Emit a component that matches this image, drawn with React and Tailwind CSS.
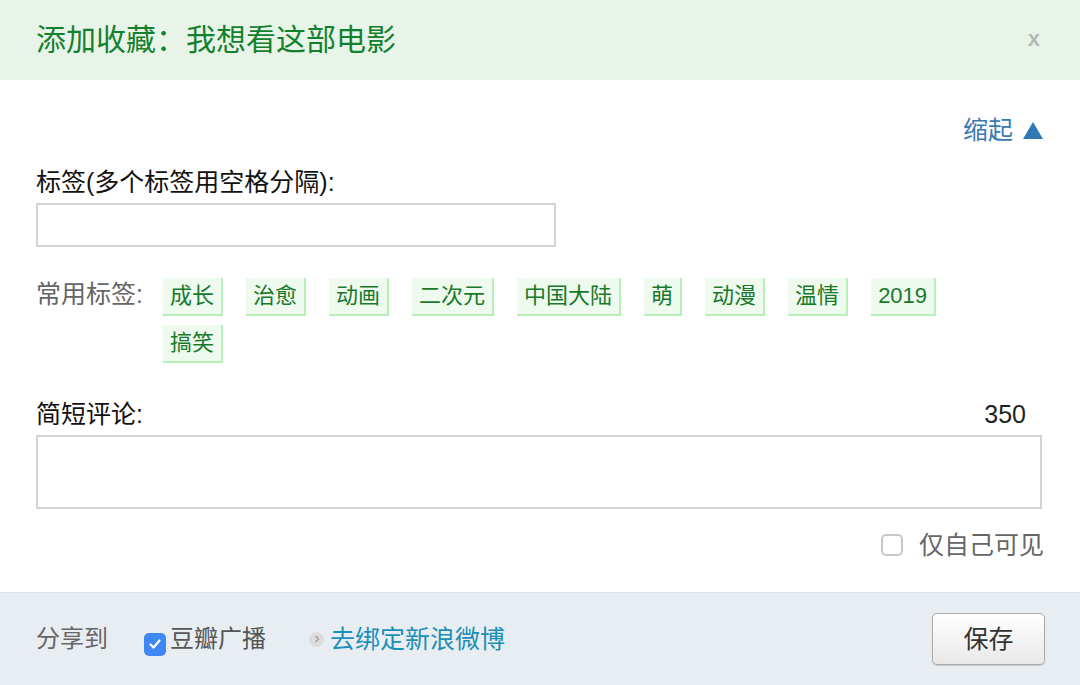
import React from 'react';

const tags = ['成长', '治愈', '动画', '二次元', '中国大陆', '萌', '动漫', '温情', '2019', '搞笑'];

const font = { fontFamily: '"Liberation Sans", "Noto Sans CJK SC", sans-serif' };

export default function App() {
  return (
    <div className="w-[1080px] h-[685px] bg-white flex flex-col overflow-hidden" style={font}>
      {/* Header */}
      <div className="h-[80px] bg-[#e9f4e8] flex items-center justify-between pl-[36px] pr-[40px] shrink-0">
        <h2 className="text-[30px] leading-none text-[#13802d]">添加收藏：我想看这部电影</h2>
        <span className="text-[22px] font-bold leading-none text-[#b8b8b8] pb-[2px]">x</span>
      </div>

      {/* Body */}
      <div className="flex-1 px-[36px]">
        <div className="flex justify-end pt-[34px]">
          <a className="text-[25px] leading-[32px] text-[#3a78ad] flex items-center gap-[10px] pr-[1px]">
            缩起
            <svg width="20" height="17" viewBox="0 0 20 17">
              <path d="M10 0 L20 17 L0 17 Z" fill="#2f78b4" />
            </svg>
          </a>
        </div>

        <div className="mt-[20px] text-[25px] leading-[32px] text-[#111]">标签(多个标签用空格分隔):</div>
        <div className="mt-[5px] w-[520px] h-[44px] border-2 border-[#d4d4d4] bg-white" />

        <div className="mt-[31px] flex">
          <div className="w-[127px] shrink-0 text-[25px] leading-[32px] text-[#666]">常用标签:</div>
          <div className="w-[800px] flex flex-wrap gap-x-[23px] gap-y-[9px]">
            {tags.map((t) => (
              <span
                key={t}
                className="h-[38px] px-[7px] flex items-center bg-[#eefaee] border-r-2 border-b-2 border-[#b6f0b6] text-[22px] leading-none text-[#19792b]"
              >
                {t}
              </span>
            ))}
          </div>
        </div>

        <div className="mt-[35px] flex justify-between items-center">
          <span className="text-[25px] leading-[32px] text-[#111]">简短评论:</span>
          <span className="text-[25px] leading-[32px] text-[#222] pr-[18px]">350</span>
        </div>
        <div className="mt-[5px] w-[1006px] h-[74px] border-2 border-[#d4d4d4] bg-white" />

        <div className="mt-[20px] flex justify-end items-center gap-[16px]">
          <span className="w-[22px] h-[22px] rounded-[5px] border-2 border-[#c8c8c8] bg-white" />
          <span className="text-[25px] leading-[32px] text-[#666]">仅自己可见</span>
        </div>
      </div>

      {/* Footer */}
      <div className="h-[93px] shrink-0 bg-[#e8edf2] border-t border-[#dfe4ea] flex items-center pl-[36px] pr-[35px]">
        <span className="text-[24px] leading-none text-[#666]">分享到</span>
        <span className="ml-[36px] mt-[10px] w-[22px] h-[23px] rounded-[5px] bg-[#3f87f5] flex items-center justify-center">
          <svg width="14" height="14" viewBox="0 0 14 14" fill="none">
            <path d="M2.5 7.5 L5.5 10.5 L11.5 3.5" stroke="white" strokeWidth="2.2" strokeLinecap="round" strokeLinejoin="round" />
          </svg>
        </span>
        <span className="ml-[4px] text-[24px] leading-none text-[#555]">豆瓣广播</span>
        <span className="ml-[43px] w-[15px] h-[15px] rounded-full bg-[#dcdcdc] flex items-center justify-center">
          <svg width="6" height="8" viewBox="0 0 6 8" fill="none">
            <path d="M1.5 1 L4.5 4 L1.5 7" stroke="#999" strokeWidth="1.3" />
          </svg>
        </span>
        <a className="ml-[6px] text-[25px] leading-none text-[#1a8fb8]">去绑定新浪微博</a>
        <button className="ml-auto w-[113px] h-[52px] rounded-[5px] border border-[#aaa] bg-gradient-to-b from-white to-[#e8e8e8] text-[25px] leading-none text-[#333] shadow-[0_1px_1px_rgba(0,0,0,0.15)]">
          保存
        </button>
      </div>
    </div>
  );
}
